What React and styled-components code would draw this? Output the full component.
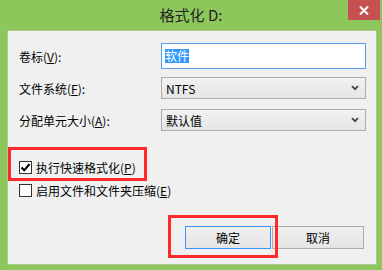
import React from "react";
import styled, { createGlobalStyle } from "styled-components";

const Global = createGlobalStyle`
  html, body { margin: 0; padding: 0; }
  body {
    font-family: "Noto Sans CJK SC", "Noto Sans", sans-serif;
    font-size: 12px;
    color: #000;
  }
`;

const Frame = styled.div`
  width: 382px;
  height: 270px;
  background: #8dc75c;
  display: flex;
  flex-direction: column;
  box-sizing: border-box;
  padding: 0 5px 5px 7px;
`;

const TitleBar = styled.div`
  height: 30px;
  margin: 0 -5px 0 -7px;
  display: grid;
  grid-template-columns: 1fr auto 1fr;
  align-items: start;
`;

const Title = styled.div`
  grid-column: 2;
  font-size: 15px;
  line-height: 15px;
  padding-top: 7px;
  color: #222;
`;

const CloseButton = styled.div`
  grid-column: 3;
  justify-self: end;
  margin-right: 2px;
  width: 32px;
  height: 20px;
  background: #c75050;
  display: flex;
  align-items: center;
  justify-content: center;
`;

const Client = styled.div`
  flex: 1;
  background: #f0f0f0;
  border: 1px solid #a9c98e;
  box-sizing: border-box;
  display: flex;
  flex-direction: column;
  position: relative;
`;

const Form = styled.div`
  padding: 12px 10px 0 11px;
`;

const Field = styled.div`
  display: grid;
  grid-template-columns: 142px 1fr;
  align-items: center;
  height: ${(p) => p.$h}px;
  margin-top: ${(p) => p.$mt || 0}px;
`;

const Label = styled.label`
  white-space: nowrap;
`;

const Key = styled.span`
  text-decoration: underline;
  text-underline-offset: 1px;
`;

const TextBox = styled.div`
  height: 26px;
  box-sizing: border-box;
  border: 1px solid #569de5;
  background: #fff;
  display: flex;
  align-items: center;
  padding-left: 3px;
`;

const Selected = styled.span`
  background: #3399ff;
  color: #fff;
  line-height: 14px;
`;

const Select = styled.div`
  height: 22px;
  box-sizing: border-box;
  border: 1px solid #acacac;
  background: linear-gradient(#f2f2f2, #e5e5e5);
  display: flex;
  align-items: center;
  justify-content: space-between;
  padding: 0 6px 0 4px;
`;

const Checks = styled.div`
  padding: 28px 0 0 11px;
  display: flex;
  flex-direction: column;
  gap: 7px;
`;

const CheckRow = styled.div`
  display: flex;
  align-items: center;
  gap: 4px;
  height: 16px;
  position: relative;
  ${(p) =>
    p.$marked &&
    `
    &::after {
      content: "";
      position: absolute;
      top: -12px;
      left: -11px;
      width: 139px;
      height: 34px;
      box-sizing: border-box;
      border: 3px solid #fe2a2a;
    }
  `}
`;

const Box = styled.span`
  width: 13px;
  height: 13px;
  box-sizing: border-box;
  border: 1px solid #333;
  background: #fff;
  display: flex;
  align-items: center;
  justify-content: center;
`;

const Buttons = styled.div`
  margin-top: auto;
  padding: 0 12px 15px 0;
  display: flex;
  justify-content: flex-end;
  gap: 1px;
`;

const Button = styled.div`
  width: ${(p) => p.$w}px;
  height: 23px;
  box-sizing: border-box;
  border: 1px solid ${(p) => (p.$primary ? "#3399ff" : "#acacac")};
  background: linear-gradient(#f0f0f0, #e5e5e5);
  display: flex;
  align-items: center;
  justify-content: center;
  position: relative;
  ${(p) =>
    p.$marked &&
    `
    &::after {
      content: "";
      position: absolute;
      top: -12px;
      left: -18px;
      right: -8px;
      bottom: -10px;
      border: 3px solid #fe2a2a;
      z-index: 1;
    }
  `}
`;

function Chevron() {
  return (
    <svg width="8" height="6" viewBox="0 0 8 6">
      <path d="M1 1.2 L4 4.2 L7 1.2" fill="none" stroke="#444" strokeWidth="1.8" />
    </svg>
  );
}

function Check({ on }) {
  return (
    <Box>
      {on && (
        <svg width="11" height="11" viewBox="0 0 11 11">
          <path d="M1.5 5.5 L4.2 8.3 L9.5 2" fill="none" stroke="#000" strokeWidth="2" />
        </svg>
      )}
    </Box>
  );
}

export default function App() {
  return (
    <>
      <Global />
      <Frame>
        <TitleBar>
          <Title>格式化 D:</Title>
          <CloseButton>
            <svg width="10" height="9" viewBox="0 0 10 9">
              <path d="M1 0.5 L9 8.5 M9 0.5 L1 8.5" stroke="#fff" strokeWidth="2" />
            </svg>
          </CloseButton>
        </TitleBar>
        <Client>
          <Form>
            <Field $h={26}>
              <Label>卷标(<Key>V</Key>):</Label>
              <TextBox>
                <Selected>软件</Selected>
              </TextBox>
            </Field>
            <Field $h={22} $mt={8}>
              <Label>文件系统(<Key>F</Key>):</Label>
              <Select>
                <span>NTFS</span>
                <Chevron />
              </Select>
            </Field>
            <Field $h={22} $mt={10}>
              <Label>分配单元大小(<Key>A</Key>):</Label>
              <Select>
                <span>默认值</span>
                <Chevron />
              </Select>
            </Field>
          </Form>
          <Checks>
            <CheckRow $marked>
              <Check on />
              <span>执行快速格式化(<Key>P</Key>)</span>
            </CheckRow>
            <CheckRow>
              <Check />
              <span>启用文件和文件夹压缩(<Key>E</Key>)</span>
            </CheckRow>
          </Checks>
          <Buttons>
            <Button $w={86} $primary $marked>确定</Button>
            <Button $w={92}>取消</Button>
          </Buttons>
        </Client>
      </Frame>
    </>
  );
}
